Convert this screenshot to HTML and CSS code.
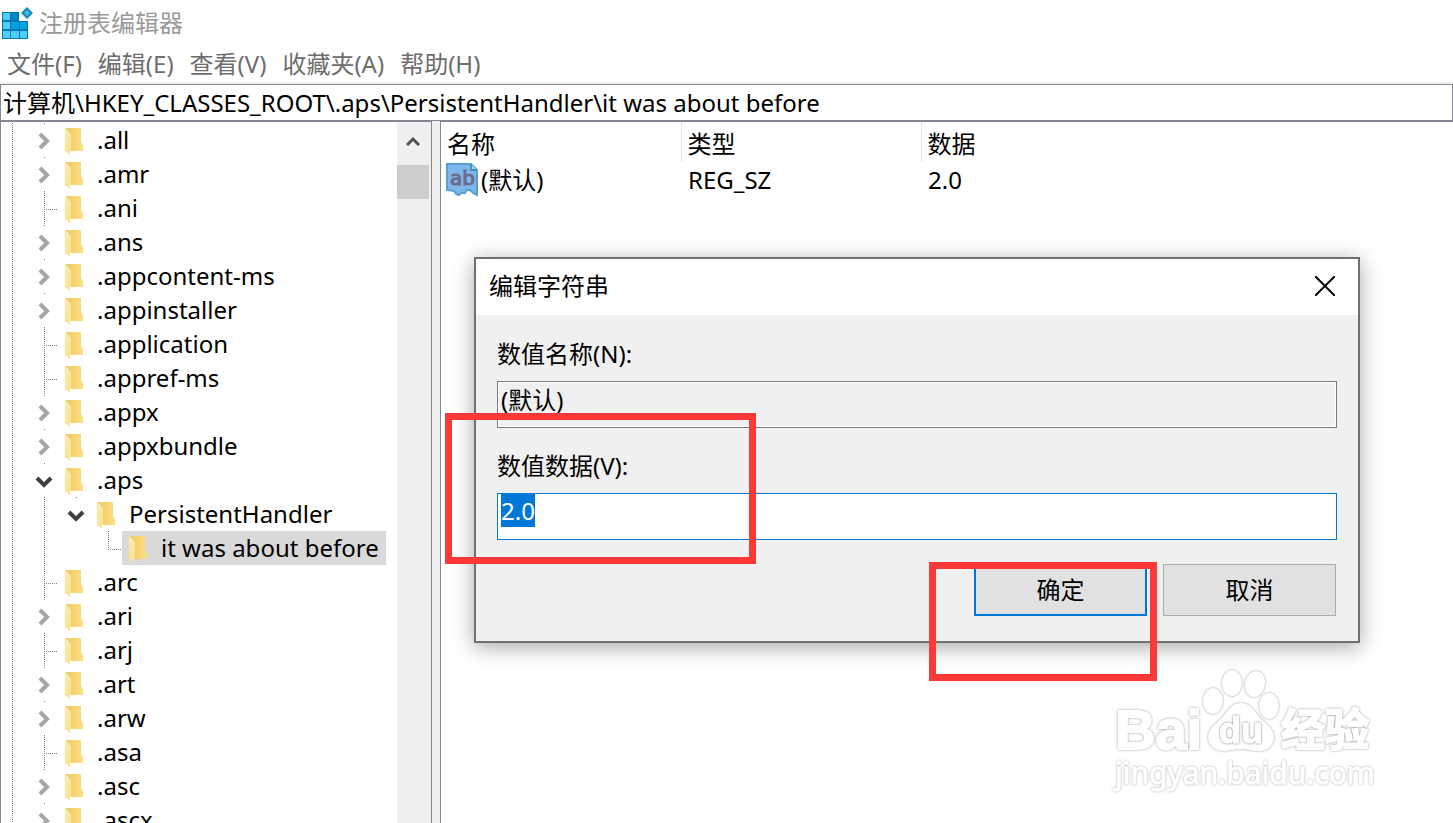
FILE: index.html
```html
<!DOCTYPE html>
<html lang="zh-CN">
    <head>
        <meta charset="utf-8">
        <title>注册表编辑器</title>
        <link rel="stylesheet" href="styles.css">
    </head>
    <body>

    <svg class="defs">
        <linearGradient id="folder-back">
            <stop offset="0" stop-color="#ecc860"/>
            <stop offset="1" stop-color="#ffdf82"/>
        </linearGradient>
        <linearGradient id="folder-flap" x2="0" y2="1">
            <stop offset="0" stop-color="#ffe9ad"/>
            <stop offset="1" stop-color="#ffe08c"/>
        </linearGradient>
        <symbol id="folder" viewBox="0 0 19 28">
            <path d="M0 0h16v14l2 3v6H4V4z" fill="url(#folder-back)"/>
            <path d="M0 0l6 6v17H5v4l-5-4z" fill="url(#folder-flap)"/>
        </symbol>
        <symbol id="closed" viewBox="0 0 18 18">
            <path d="M5 2l7 7-7 7" fill="none" stroke="#a6a6a6" stroke-width="4"/>
        </symbol>
        <symbol id="open" viewBox="0 0 18 18">
            <path d="M2 6l7 7 7-7" fill="none" stroke="#404040" stroke-width="4"/>
        </symbol>
    </svg>

    <header class="titlebar">
        <svg class="app-icon" width="32" height="32" viewBox="0 0 32 32">
            <path d="M0 5h17v9h9v18H0z" fill="#0078b0"/>
            <path d="M1 6h7v7H1zM1 15h7v7H1zM1 24h7v7H1zM9 24h8v7H9zM18 24h7v7h-7z" fill="#4fcdfb"/>
            <path d="M9 6h7v7H9z" fill="#0088c0"/>
            <path d="M9 15h8v7H9zM18 15h7v7h-7z" fill="#00a2df"/>
            <path d="M25 0l6 6-6 6-6-6z" fill="#1589b8"/>
            <path d="M25 3l3 3-3 3-3-3z" fill="#48b9df"/>
        </svg>
        <h1>注册表编辑器</h1>
    </header>

    <nav class="menu">
        <button>文件(F)</button>
        <button>编辑(E)</button>
        <button>查看(V)</button>
        <button>收藏夹(A)</button>
        <button>帮助(H)</button>
    </nav>

    <input class="path" aria-label="路径" value="计算机\HKEY_CLASSES_ROOT\.aps\PersistentHandler\it was about before">

    <main class="panes">
        <div class="tree-pane">
            <ul class="tree">
                <li><i class="root"></i><button class="twisty"><svg><use href="#closed"/></svg></button><span class="key"><svg><use href="#folder"/></svg>.all</span></li>
                <li><i class="root"></i><button class="twisty"><svg><use href="#closed"/></svg></button><span class="key"><svg><use href="#folder"/></svg>.amr</span></li>
                <li><i class="root"></i><i class="leaf"></i><span class="key"><svg><use href="#folder"/></svg>.ani</span></li>
                <li><i class="root"></i><button class="twisty"><svg><use href="#closed"/></svg></button><span class="key"><svg><use href="#folder"/></svg>.ans</span></li>
                <li><i class="root"></i><button class="twisty"><svg><use href="#closed"/></svg></button><span class="key"><svg><use href="#folder"/></svg>.appcontent-ms</span></li>
                <li><i class="root"></i><button class="twisty"><svg><use href="#closed"/></svg></button><span class="key"><svg><use href="#folder"/></svg>.appinstaller</span></li>
                <li><i class="root"></i><i class="leaf"></i><span class="key"><svg><use href="#folder"/></svg>.application</span></li>
                <li><i class="root"></i><i class="leaf"></i><span class="key"><svg><use href="#folder"/></svg>.appref-ms</span></li>
                <li><i class="root"></i><button class="twisty"><svg><use href="#closed"/></svg></button><span class="key"><svg><use href="#folder"/></svg>.appx</span></li>
                <li><i class="root"></i><button class="twisty"><svg><use href="#closed"/></svg></button><span class="key"><svg><use href="#folder"/></svg>.appxbundle</span></li>
                <li><i class="root"></i><button class="twisty"><svg><use href="#open"/></svg></button><span class="key"><svg><use href="#folder"/></svg>.aps</span></li>
                <li><i class="root"></i><i class="guide"></i><button class="twisty"><svg><use href="#open"/></svg></button><span class="key"><svg><use href="#folder"/></svg>PersistentHandler</span></li>
                <li><i class="root"></i><i class="guide"></i><i class="blank"></i><i class="leaf last"></i><span class="key selected"><svg><use href="#folder"/></svg>it was about before</span></li>
                <li><i class="root"></i><i class="leaf"></i><span class="key"><svg><use href="#folder"/></svg>.arc</span></li>
                <li><i class="root"></i><button class="twisty"><svg><use href="#closed"/></svg></button><span class="key"><svg><use href="#folder"/></svg>.ari</span></li>
                <li><i class="root"></i><i class="leaf"></i><span class="key"><svg><use href="#folder"/></svg>.arj</span></li>
                <li><i class="root"></i><button class="twisty"><svg><use href="#closed"/></svg></button><span class="key"><svg><use href="#folder"/></svg>.art</span></li>
                <li><i class="root"></i><button class="twisty"><svg><use href="#closed"/></svg></button><span class="key"><svg><use href="#folder"/></svg>.arw</span></li>
                <li><i class="root"></i><i class="leaf"></i><span class="key"><svg><use href="#folder"/></svg>.asa</span></li>
                <li><i class="root"></i><button class="twisty"><svg><use href="#closed"/></svg></button><span class="key"><svg><use href="#folder"/></svg>.asc</span></li>
                <li><i class="root"></i><button class="twisty"><svg><use href="#closed"/></svg></button><span class="key"><svg><use href="#folder"/></svg>.ascx</span></li>
            </ul>
            <div class="scrollbar">
                <button class="scroll-up" aria-label="向上滚动">
                    <svg width="14" height="10" viewBox="0 0 14 10"><path d="M1 9l6-6 6 6" fill="none" stroke="#505050" stroke-width="3"/></svg>
                </button>
                <div class="thumb"></div>
            </div>
        </div>

        <div class="values-pane">
            <table class="values">
                <thead>
                    <tr><th class="col-name">名称</th><th class="col-type">类型</th><th>数据</th></tr>
                </thead>
                <tbody>
                    <tr>
                        <td class="name-cell"><div class="value-name">
                            <svg width="33" height="34" viewBox="0 0 33 34">
                                <path d="M1 1h24l6 6v25l-4-2-3-3h-3l-2 3h-4l-2 2-3-1-2-3-7-1z" fill="#7cb8ea" stroke="#5a9fd2" stroke-width="2"/>
                                <path d="M25 1v6h6" fill="#a5d3f5" stroke="#4a8fc4" stroke-width="2"/>
                                <text class="icon-ab" x="4" y="22">ab</text>
                            </svg>(默认)</div></td>
                        <td>REG_SZ</td>
                        <td>2.0</td>
                    </tr>
                </tbody>
            </table>
        </div>
    </main>

    <form class="dialog" role="dialog" aria-labelledby="dialog-title">
        <div class="dialog-head">
            <h2 id="dialog-title">编辑字符串</h2>
            <button type="button" class="close" aria-label="关闭">
                <svg width="20" height="20" viewBox="0 0 20 20"><path d="M0 0l20 20M20 0L0 20" stroke="#000" stroke-width="2"/></svg>
            </button>
        </div>
        <div class="dialog-body">
            <label for="value-name">数值名称(N):</label>
            <input id="value-name" value="(默认)" readonly>
            <label for="value-data">数值数据(V):</label>
            <input id="value-data" value="2.0">
            <div class="actions">
                <button type="button" class="ok">确定</button>
                <button type="button">取消</button>
            </div>
        </div>
    </form>

    <div class="mark mark-data"></div>
    <div class="mark mark-ok"></div>

    <svg class="watermark" width="270" height="130" viewBox="0 0 270 130">
        <g class="glow">
            <text class="wm-bai" x="5" y="81">Bai</text>
            <ellipse cx="103" cy="33" rx="9" ry="12"/>
            <ellipse cx="122" cy="15" rx="9" ry="12"/>
            <ellipse cx="145" cy="16" rx="9" ry="12" transform="rotate(12 145 16)"/>
            <ellipse cx="159" cy="38" rx="9" ry="12"/>
            <path d="M131 36c9 0 13 8 17 13s15 11 15 20-7 13-15 13-9-2-17-2-10 2-17 2-15-4-15-13 10-14 15-20 8-13 17-13z"/>
            <text class="wm-jy" x="171" y="78">经验</text>
        </g>
        <g class="glow inner">
            <text class="wm-du" x="109" y="75">du</text>
        </g>
        <g class="glow url">
            <text class="wm-url" x="5" y="116">jingyan.baidu.com</text>
        </g>
    </svg>

    <script>
        // open with the current data selected, ready to be overwritten
        var data = document.getElementById('value-data');
        data.focus();
        data.select();
    </script>
</body>
</html>
```
FILE: styles.css
```css
* {
    box-sizing: border-box;
}
body, html {
    height: 100%;
    margin: 0;
    padding: 0;
}
body, button, input {
    font-family: "Noto Sans", "Noto Sans CJK SC", sans-serif;
    font-size: 24px;
    line-height: 34px;
    color: #000;
}
body {
    display: flex;
    flex-direction: column;
    position: relative;
    overflow: hidden;
    background: #fff;
}
h1, h2 {
    margin: 0;
    font-size: 24px;
    font-weight: normal;
}
button {
    padding: 0;
    border: none;
    background: none;
}
.defs {
    position: absolute;
    width: 0;
    height: 0;
}
.titlebar {
    display: flex;
    align-items: center;
    gap: 5px;
    height: 46px;
    padding-left: 2px;
    color: #999;
}
.menu {
    display: flex;
    gap: 16px;
    height: 38px;
    padding: 0 7px;
    border-bottom: 2px solid #f0f0f0;
}
.menu button {
    color: #6d6d6d;
}
.path {
    width: 100%;
    height: 37px;
    padding: 0 2px 2px;
    border: 1px solid #828790;
    outline: none;
}
.panes {
    display: flex;
    flex: 1;
    min-height: 0;
    background: #f0f0f0;
    gap: 8px;
}

/* key tree */
.tree-pane {
    display: flex;
    width: 432px;
    overflow: hidden;
    border: 1px solid #828790;
    border-bottom: none;
    background: #fff;
}
.tree {
    flex: 1;
    margin: 0;
    padding: 1px 0 0;
    list-style: none;
}
.tree li {
    display: flex;
    height: 34px;
}
.root, .guide, .leaf {
    background: repeating-linear-gradient(#808080 0 1px, transparent 1px 2px) no-repeat 16px 0 / 1px 100%;
}
.root {
    width: 27px;
    background-position: 11px 0;
}
.guide, .blank {
    width: 32px;
}
.leaf, .twisty {
    width: 30px;
}
.leaf {
    background:
        repeating-linear-gradient(#808080 0 1px, transparent 1px 2px) no-repeat 16px 0 / 1px 100%,
        repeating-linear-gradient(90deg, #808080 0 1px, transparent 1px 2px) no-repeat 16px 18px / 15px 1px;
}
.leaf.last {
    background-size: 1px 18px, 15px 1px;
}
.twisty {
    display: flex;
    align-items: center;
    padding: 2px 0 0 7px;
    background: linear-gradient(#808080, #808080) no-repeat 16px 0 / 1px 1px;
}
.twisty svg {
    width: 18px;
    height: 18px;
}
.key {
    display: flex;
    padding: 0 7px;
    white-space: nowrap;
}
.key svg {
    width: 19px;
    height: 28px;
    margin: 5px 13px 0 0;
}
.key.selected {
    background: #d9d9d9;
}
.scrollbar {
    width: 34px;
    padding-right: 2px;
    background: #f0f0f0;
}
.scroll-up {
    display: flex;
    align-items: center;
    justify-content: center;
    width: 100%;
    height: 43px;
    padding-bottom: 6px;
}
.thumb {
    height: 34px;
    background: #cdcdcd;
}

/* values list */
.values-pane {
    flex: 1;
    border: 1px solid #828790;
    border-width: 1px 0 0 1px;
    background: #fff;
}
.values {
    width: 100%;
    table-layout: fixed;
    border-collapse: collapse;
    text-align: left;
}
.values th {
    height: 40px;
    padding: 4px 6px 0;
    border-left: 1px solid #e5e5e5;
    font-weight: normal;
}
.values .col-name {
    border-left: none;
}
.values td {
    height: 34px;
    padding: 0 7px;
}
.values .name-cell {
    padding: 1px 5px 0;
}
.col-name, .col-type {
    width: 240px;
}
.value-name {
    display: flex;
    gap: 2px;
}
.icon-ab {
    font: 20px "DejaVu Sans", sans-serif;
    fill: #6e6a8c;
    stroke: #6e6a8c;
}

/* edit dialog */
.dialog {
    position: absolute;
    left: 474px;
    right: 93px;
    top: 257px;
    border: 2px solid #707070;
    background: #f0f0f0;
    box-shadow: 0 4px 20px rgba(0, 0, 0, .35);
}
.dialog-head {
    display: flex;
    align-items: center;
    justify-content: space-between;
    height: 56px;
    padding: 0 23px 2px 13px;
    background: #fff;
}
.close {
    display: flex;
}
.dialog-body {
    display: flex;
    flex-direction: column;
    padding: 22px 21px 25px;
}
.dialog-body input {
    height: 47px;
    margin: 10px 0 21px;
    padding: 0 3px 12px;
    border: 1px solid #7a7a7a;
    background: #f0f0f0;
    box-shadow: inset 0 0 0 1px #fff;
    outline: none;
}
.dialog-body #value-data {
    border-color: #0078d7;
    background: #fff;
}
#value-data::selection {
    background: #0078d7;
    color: #fff;
}
.actions {
    display: flex;
    justify-content: flex-end;
    gap: 16px;
    padding: 3px 1px 0 0;
}
.actions button {
    width: 173px;
    height: 52px;
    border: 1px solid #adadad;
    background: #e1e1e1;
}
.actions .ok {
    border: 2px solid #0078d7;
}

/* red highlight boxes drawn over the window */
.mark {
    position: absolute;
    border: 7px solid #fc3838;
}
.mark-data {
    left: 445px;
    top: 413px;
    width: 311px;
    height: 151px;
}
.mark-ok {
    right: 296px;
    top: 562px;
    width: 228px;
    height: 119px;
}

.watermark {
    position: absolute;
    right: 73px;
    top: 668px;
}
.glow {
    fill: #fff;
    stroke: #fff;
    stroke-width: 2px;
    filter: drop-shadow(0 0 1px #999);
}
.glow.inner {
    stroke-width: 1px;
    filter: drop-shadow(0 0 1px #777);
}
.glow.url {
    stroke-width: 1px;
    filter: drop-shadow(0 0 1px #aaa);
}
.wm-bai {
    font: bold 56px "Liberation Sans", sans-serif;
}
.wm-du {
    font: bold 36px "Liberation Sans", sans-serif;
}
.wm-jy {
    font: bold 44px "Noto Sans CJK SC", sans-serif;
}
.wm-url {
    font: 30px "Noto Sans", sans-serif;
}
```
